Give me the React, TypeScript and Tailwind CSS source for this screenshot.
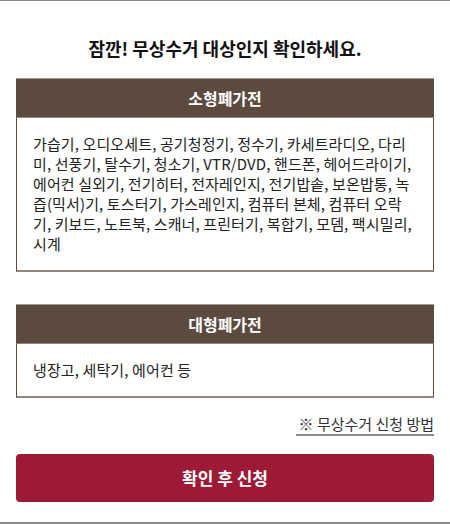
const smallItems =
  "가습기, 오디오세트, 공기청정기, 정수기, 카세트라디오, 다리미, 선풍기, 탈수기, 청소기, VTR/DVD, 핸드폰, 헤어드라이기, 에어컨 실외기, 전기히터, 전자레인지, 전기밥솥, 보온밥통, 녹즙(믹서)기, 토스터기, 가스레인지, 컴퓨터 본체, 컴퓨터 오락기, 키보드, 노트북, 스캐너, 프린터기, 복합기, 모뎀, 팩시밀리, 시계";

function CategoryBox({ title, children }: { title: string; children: React.ReactNode }) {
  return (
    <section>
      <h3 className="h-[39px] flex items-center justify-center border-t border-[#a59b94] bg-[#5c4a3f] text-[16px] font-bold text-white">
        {title}
      </h3>
      <div className="border-x border-t border-x-[#5c4a3f] border-t-[#8f857e] border-b-2 border-b-[#8f8780] px-4 py-4 text-[15px] leading-5 tracking-[0.12px] text-[#222]">
        {children}
      </div>
    </section>
  );
}

export default function App() {
  return (
    <div
      className="w-[450px] h-[524px] flex flex-col bg-white border-t border-[#8a8a8a]"
      style={{ fontFamily: '"Noto Sans CJK KR", "Noto Sans", sans-serif' }}
    >
      <div className="flex-1 px-4 pt-[35px]">
        <h2 className="text-center text-[18px] leading-6 font-bold text-[#111]">
          잠깐! 무상수거 대상인지 확인하세요.
        </h2>

        <div className="mt-[18px] flex flex-col gap-8">
          <CategoryBox title="소형폐가전">{smallItems}</CategoryBox>
          <CategoryBox title="대형폐가전">냉장고, 세탁기, 에어컨 등</CategoryBox>
        </div>

        <div className="mt-4 flex justify-end">
          <a className="border-b-2 border-[#8a8a8a] pl-[3px] text-[15px] leading-5 text-[#333]">
            ※ 무상수거 신청 방법
          </a>
        </div>

        <button className="mt-[18px] h-12 w-full rounded bg-[#9d1a37] text-[17px] font-bold text-white">
          확인 후 신청
        </button>
      </div>
      <div className="h-[2px] bg-[#8a8a8a]" />
    </div>
  );
}
